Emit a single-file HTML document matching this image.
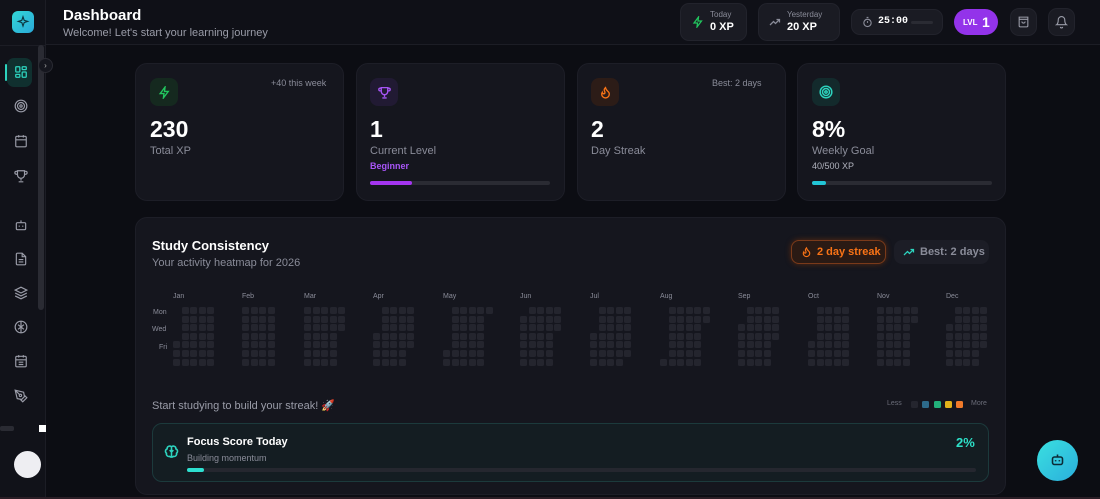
<!DOCTYPE html>
<html style="overflow:hidden;width:1100px;height:499px"><head><meta charset="utf-8"><style>
*{margin:0;padding:0;box-sizing:border-box}
body{width:1100px;height:499px;overflow:hidden;background:#0c0d13;font-family:"Liberation Sans",sans-serif;color:#fff;position:relative}
.abs{position:absolute}
.sb{left:0;top:0;width:46px;height:499px;background:#111219;border-right:1px solid #1c1d25}
.hdr{left:46px;top:0;width:1054px;height:45px;background:#0f1017;border-bottom:1px solid #1c1d25}
.card{background:#15161e;border:1px solid #1d1e27;border-radius:12px}
.ib{width:28px;height:28px;border-radius:8px;display:flex;align-items:center;justify-content:center}
.big{font-size:23px;font-weight:bold}
.lbl{font-size:11px;color:#8a8c99}
.sm{font-size:9px;color:#8a8c99}
.pill{border-radius:9px;background:#1a1b23;border:1px solid #22232c}
.cell{position:absolute;width:7px;height:7px;border-radius:1.5px;background:#24252e}
.ml{position:absolute;font-size:7px;color:#8a8c99;top:293px}
svg{display:block}
</style></head><body>
<div class="abs sb"></div>
<div class="abs" style="left:12px;top:11px;width:22px;height:22px;border-radius:6px;background:linear-gradient(135deg,#33d7d6,#2aa9d9);display:flex;align-items:center;justify-content:center"><svg width="14" height="14" viewBox="0 0 24 24" fill="none" stroke="#0c3640" stroke-width="2"><path d="M12 3l2 6 6 2-6 2-2 6-2-6-6-2 6-2z"/></svg></div>
<div class="abs" style="left:0;top:45px;width:46px;height:1px;background:#1c1d25"></div>
<div class="abs" style="left:38px;top:45px;width:6px;height:265px;background:#2a2b33;border-radius:3px"></div>
<div class="abs" style="left:38px;top:58px;width:15px;height:15px;border-radius:50%;background:#15161e;border:1px solid #2a2b33;font-size:8px;color:#aaa;text-align:center;line-height:13px">›</div>
<div class="abs" style="left:7px;top:58px;width:25px;height:29px;border-radius:7px;background:#10302f"></div>
<div class="abs" style="left:5px;top:64px;width:2px;height:17px;background:#2dd4bf;border-radius:1px"></div>
<div class="abs" style="left:14px;top:65px"><svg width="14" height="14" viewBox="0 0 24 24" fill="none" stroke="#2dd4bf" stroke-width="2.2"><rect x="3" y="3" width="7" height="9" rx="1"/><rect x="14" y="3" width="7" height="5" rx="1"/><rect x="14" y="12" width="7" height="9" rx="1"/><rect x="3" y="16" width="7" height="5" rx="1"/></svg></div>
<div class="abs" style="left:14px;top:99px"><svg width="14" height="14" viewBox="0 0 24 24" fill="none" stroke="#9a9ca8" stroke-width="2"><circle cx="12" cy="12" r="10"/><circle cx="12" cy="12" r="6"/><circle cx="12" cy="12" r="2"/></svg></div>
<div class="abs" style="left:14px;top:134px"><svg width="14" height="14" viewBox="0 0 24 24" fill="none" stroke="#9a9ca8" stroke-width="2"><rect x="3" y="4" width="18" height="18" rx="2"/><path d="M16 2v4M8 2v4M3 10h18"/></svg></div>
<div class="abs" style="left:14px;top:169px"><svg width="14" height="14" viewBox="0 0 24 24" fill="none" stroke="#9a9ca8" stroke-width="2"><path d="M6 9H4a2 2 0 010-5h2M18 9h2a2 2 0 000-5h-2M6 3h12v7a6 6 0 01-12 0zM12 16v4M8 22h8"/></svg></div>
<div class="abs" style="left:14px;top:218px"><svg width="14" height="14" viewBox="0 0 24 24" fill="none" stroke="#9a9ca8" stroke-width="2"><rect x="4" y="8" width="16" height="12" rx="2"/><path d="M12 8V4M9 13v2M15 13v2"/></svg></div>
<div class="abs" style="left:14px;top:252px"><svg width="14" height="14" viewBox="0 0 24 24" fill="none" stroke="#9a9ca8" stroke-width="2"><path d="M14 2H6a2 2 0 00-2 2v16a2 2 0 002 2h12a2 2 0 002-2V8z"/><path d="M14 2v6h6M8 13h8M8 17h8"/></svg></div>
<div class="abs" style="left:14px;top:286px"><svg width="14" height="14" viewBox="0 0 24 24" fill="none" stroke="#9a9ca8" stroke-width="2"><path d="M12 2L2 7l10 5 10-5zM2 12l10 5 10-5M2 17l10 5 10-5"/></svg></div>
<div class="abs" style="left:14px;top:320px"><svg width="14" height="14" viewBox="0 0 24 24" fill="none" stroke="#9a9ca8" stroke-width="2"><circle cx="12" cy="12" r="10"/><path d="M12 2v20M7 8l5 4 5-4M7 16l5-4 5 4"/></svg></div>
<div class="abs" style="left:14px;top:354px"><svg width="14" height="14" viewBox="0 0 24 24" fill="none" stroke="#9a9ca8" stroke-width="2"><rect x="3" y="4" width="18" height="18" rx="2"/><path d="M16 2v4M8 2v4M3 10h18M8 14h8M8 18h8"/></svg></div>
<div class="abs" style="left:14px;top:389px"><svg width="14" height="14" viewBox="0 0 24 24" fill="none" stroke="#9a9ca8" stroke-width="2"><path d="M12 19l7-7 3 3-7 7zM18 13l-1.5-7.5L2 2l3.5 14.5L13 18zM2 2l7.6 7.6"/><circle cx="11" cy="11" r="2"/></svg></div>
<div class="abs" style="left:0;top:426px;width:14px;height:5px;background:#2a2b33;border-radius:2px"></div>
<div class="abs" style="left:39px;top:425px;width:7px;height:7px;background:#fff"></div>
<div class="abs" style="left:14px;top:451px;width:27px;height:27px;border-radius:50%;background:#eeeef2"></div>

<div class="abs hdr"></div>
<div class="abs" style="left:63px;top:7px;font-size:15px;font-weight:bold">Dashboard</div>
<div class="abs" style="left:63px;top:27px;font-size:11px;color:#9a9ca8">Welcome! Let's start your learning journey</div>

<div class="abs pill" style="left:680px;top:3px;width:67px;height:38px"></div>
<div class="abs" style="left:692px;top:16px"><svg width="12" height="12" viewBox="0 0 24 24" fill="none" stroke="#22c55e" stroke-width="2.5"><path d="M13 2L4 14h7l-1 8 9-12h-7z"/></svg></div>
<div class="abs" style="left:710px;top:10px;font-size:8px;color:#8a8c99">Today</div>
<div class="abs" style="left:710px;top:21px;font-size:11px;font-weight:bold">0 XP</div>
<div class="abs pill" style="left:758px;top:3px;width:82px;height:38px"></div>
<div class="abs" style="left:769px;top:17px"><svg width="12" height="10" viewBox="0 0 24 20" fill="none" stroke="#8a8c99" stroke-width="2.5"><path d="M2 16l7-7 4 4 8-8M15 5h6v6"/></svg></div>
<div class="abs" style="left:787px;top:10px;font-size:8px;color:#8a8c99">Yesterday</div>
<div class="abs" style="left:787px;top:21px;font-size:11px;font-weight:bold">20 XP</div>
<div class="abs pill" style="left:851px;top:9px;width:92px;height:26px"></div>
<div class="abs" style="left:862px;top:16px"><svg width="11" height="12" viewBox="0 0 24 24" fill="none" stroke="#8a8c99" stroke-width="2.5"><circle cx="12" cy="14" r="8"/><path d="M12 14V10M10 2h4"/></svg></div>
<div class="abs" style="left:878px;top:16px;font-size:10px;font-weight:bold;font-family:'Liberation Mono',monospace">25:00</div>
<div class="abs" style="left:911px;top:21px;width:22px;height:3px;background:#2a2b33;border-radius:2px"></div>
<div class="abs" style="left:954px;top:9px;width:44px;height:26px;border-radius:13px;background:#9333ea;font-weight:bold"><span class="abs" style="left:9px;top:9px;font-size:8px">LVL</span><span class="abs" style="left:28px;top:5px;font-size:14px">1</span></div>
<div class="abs pill" style="left:1010px;top:8px;width:27px;height:28px"></div>
<div class="abs" style="left:1017px;top:15px"><svg width="13" height="14" viewBox="0 0 24 24" fill="none" stroke="#9a9ca8" stroke-width="2"><path d="M4 3h16v16a2 2 0 01-2 2H6a2 2 0 01-2-2zM4 7h16M9 11a3 3 0 006 0"/></svg></div>
<div class="abs pill" style="left:1048px;top:8px;width:27px;height:28px"></div>
<div class="abs" style="left:1055px;top:15px"><svg width="13" height="14" viewBox="0 0 24 24" fill="none" stroke="#9a9ca8" stroke-width="2"><path d="M6 8a6 6 0 0112 0c0 7 3 9 3 9H3s3-2 3-9M10 21a2 2 0 004 0"/></svg></div>

<div class="abs card" style="left:135px;top:63px;width:209px;height:138px"></div>
<div class="abs ib" style="left:150px;top:78px;background:#15291f"><svg width="13" height="13" viewBox="0 0 24 24" fill="none" stroke="#22c55e" stroke-width="2.5"><path d="M13 2L4 14h7l-1 8 9-12h-7z"/></svg></div>
<div class="abs sm" style="left:271px;top:78px">+40 this week</div>
<div class="abs big" style="left:150px;top:116px">230</div>
<div class="abs lbl" style="left:150px;top:145px">Total XP</div>

<div class="abs card" style="left:356px;top:63px;width:209px;height:138px"></div>
<div class="abs ib" style="left:370px;top:78px;background:#211a33"><svg width="13" height="13" viewBox="0 0 24 24" fill="none" stroke="#a855f7" stroke-width="2.5"><path d="M6 9H4a2 2 0 010-5h2M18 9h2a2 2 0 000-5h-2M6 3h12v7a6 6 0 01-12 0zM12 16v4M8 22h8"/></svg></div>
<div class="abs big" style="left:370px;top:116px">1</div>
<div class="abs lbl" style="left:370px;top:145px">Current Level</div>
<div class="abs" style="left:370px;top:161px;font-size:9px;color:#a855f7;font-weight:bold">Beginner</div>
<div class="abs" style="left:370px;top:181px;width:180px;height:4px;border-radius:2px;background:#2a2b33"><div style="width:42px;height:4px;border-radius:2px;background:#a435f0"></div></div>

<div class="abs card" style="left:577px;top:63px;width:209px;height:138px"></div>
<div class="abs ib" style="left:591px;top:78px;background:#2c1c17"><svg width="13" height="13" viewBox="0 0 24 24" fill="none" stroke="#f97316" stroke-width="2.5"><path d="M8.5 14.5A2.5 2.5 0 0011 12c0-1.4-.5-2-1-3-1.1-2.1-.2-4 2-6 .5 2.5 2 4.9 4 6.5 2 1.6 3 3.5 3 5.5a7 7 0 11-14 0c0-1.2.4-2.3 1-3.3.3 1.4 1 2.5 2.5 2.8z"/></svg></div>
<div class="abs sm" style="left:712px;top:78px">Best: 2 days</div>
<div class="abs big" style="left:591px;top:116px">2</div>
<div class="abs lbl" style="left:591px;top:145px">Day Streak</div>

<div class="abs card" style="left:797px;top:63px;width:209px;height:138px"></div>
<div class="abs ib" style="left:812px;top:78px;background:#132a2c"><svg width="14" height="14" viewBox="0 0 24 24" fill="none" stroke="#2dd4bf" stroke-width="2.5"><circle cx="12" cy="12" r="10"/><circle cx="12" cy="12" r="6"/><circle cx="12" cy="12" r="2"/></svg></div>
<div class="abs big" style="left:812px;top:116px">8%</div>
<div class="abs lbl" style="left:812px;top:145px">Weekly Goal</div>
<div class="abs" style="left:812px;top:161px;font-size:9px;color:#b0b2bd">40/500 XP</div>
<div class="abs" style="left:812px;top:181px;width:180px;height:4px;border-radius:2px;background:#2a2b33"><div style="width:14px;height:4px;border-radius:2px;background:#22c5d6"></div></div>

<div class="abs card" style="left:135px;top:217px;width:871px;height:278px"></div>
<div class="abs" style="left:152px;top:238px;font-size:13px;font-weight:bold">Study Consistency</div>
<div class="abs" style="left:152px;top:257px;font-size:11px;color:#8a8c99">Your activity heatmap for 2026</div>
<div class="abs" style="left:791px;top:240px;width:95px;height:24px;border-radius:8px;background:#2a1a14;border:1px solid #7a3a1a;box-shadow:0 0 6px #5a2a10"></div>
<div class="abs" style="left:801px;top:246px"><svg width="11" height="12" viewBox="0 0 24 24" fill="none" stroke="#f97316" stroke-width="2.5"><path d="M8.5 14.5A2.5 2.5 0 0011 12c0-1.4-.5-2-1-3-1.1-2.1-.2-4 2-6 .5 2.5 2 4.9 4 6.5 2 1.6 3 3.5 3 5.5a7 7 0 11-14 0c0-1.2.4-2.3 1-3.3.3 1.4 1 2.5 2.5 2.8z"/></svg></div>
<div class="abs" style="left:817px;top:246px;font-size:11px;color:#f97316;font-weight:bold">2 day streak</div>
<div class="abs" style="left:894px;top:240px;width:95px;height:24px;border-radius:8px;background:#1c1d26"></div>
<div class="abs" style="left:903px;top:247px"><svg width="12" height="10" viewBox="0 0 24 20" fill="none" stroke="#2dd4bf" stroke-width="2.5"><path d="M2 16l7-7 4 4 8-8M15 5h6v6"/></svg></div>
<div class="abs" style="left:920px;top:246px;font-size:11px;color:#8a8c99;font-weight:bold">Best: 2 days</div>

<div class="abs" style="left:153px;top:309px;font-size:7px;color:#8a8c99">Mon</div>
<div class="abs" style="left:152px;top:326px;font-size:7px;color:#8a8c99">Wed</div>
<div class="abs" style="left:159px;top:344px;font-size:7px;color:#8a8c99">Fri</div>
<div id="hm"></div>

<div class="abs" style="left:152px;top:399px;font-size:11px;color:#9a9ca8">Start studying to build your streak! 🚀</div>
<div class="abs" style="left:887px;top:400px;font-size:7px;color:#6a6c78">Less</div>
<div class="abs" style="left:911px;top:401px;width:7px;height:7px;border-radius:1.5px;background:#24252e"></div>
<div class="abs" style="left:922px;top:401px;width:7px;height:7px;border-radius:1.5px;background:#2d6a8a"></div>
<div class="abs" style="left:934px;top:401px;width:7px;height:7px;border-radius:1.5px;background:#22b07a"></div>
<div class="abs" style="left:945px;top:401px;width:7px;height:7px;border-radius:1.5px;background:#e2b21a"></div>
<div class="abs" style="left:956px;top:401px;width:7px;height:7px;border-radius:1.5px;background:#f07a2a"></div>
<div class="abs" style="left:971px;top:400px;font-size:7px;color:#6a6c78">More</div>

<div class="abs" style="left:152px;top:423px;width:837px;height:59px;border-radius:10px;background:#141d22;border:1px solid #1c3a3c"></div>
<div class="abs" style="left:164px;top:444px"><svg width="15" height="16" viewBox="0 0 24 24" fill="none" stroke="#2dd4bf" stroke-width="2.5"><path d="M12 4a4 4 0 00-7 3 4 4 0 00-1 7 4 4 0 005 5 3 3 0 003 1 3 3 0 003-1 4 4 0 005-5 4 4 0 00-1-7 4 4 0 00-7-3zM12 4v16M9 9l3 3 3-3"/></svg></div>
<div class="abs" style="left:187px;top:436px;font-size:11px;font-weight:bold">Focus Score Today</div>
<div class="abs" style="left:187px;top:453px;font-size:9px;color:#8a8c99">Building momentum</div>
<div class="abs" style="left:956px;top:435px;font-size:13px;font-weight:bold;color:#2de0c8">2%</div>
<div class="abs" style="left:187px;top:468px;width:789px;height:4px;border-radius:2px;background:#25272f"><div style="width:17px;height:4px;border-radius:2px;background:#2de0d0"></div></div>

<div class="abs" style="left:1037px;top:440px;width:41px;height:41px;border-radius:50%;background:linear-gradient(135deg,#3ae0e0,#2aaedc)"></div>
<div class="abs" style="left:1050px;top:452px"><svg width="15" height="15" viewBox="0 0 24 24" fill="none" stroke="#0c2a36" stroke-width="2.5"><rect x="4" y="8" width="16" height="12" rx="3"/><path d="M12 8V4M9 13v2M15 13v2"/></svg></div>
<div class="abs" style="left:0;top:497px;width:1100px;height:2px;background:#2a1e26"></div>

<script>
var xs=[173,242,304,373,443,520,590,660,738,808,877,946];
var names=["Jan","Feb","Mar","Apr","May","Jun","Jul","Aug","Sep","Oct","Nov","Dec"];
var h="";
for(var m=0;m<12;m++){
 var off=new Date(2026,m,1).getDay(), days=new Date(2026,m+1,0).getDate();
 h+='<div class="ml" style="left:'+xs[m]+'px">'+names[m]+'</div>';
 for(var d=0;d<days;d++){var i=off+d,c=Math.floor(i/7),r=i%7;
  h+='<div class="cell" style="left:'+(xs[m]+c*8.6).toFixed(1)+'px;top:'+(307+r*8.6).toFixed(1)+'px"></div>';}
}
document.getElementById("hm").innerHTML=h;
</script>
</body></html>
